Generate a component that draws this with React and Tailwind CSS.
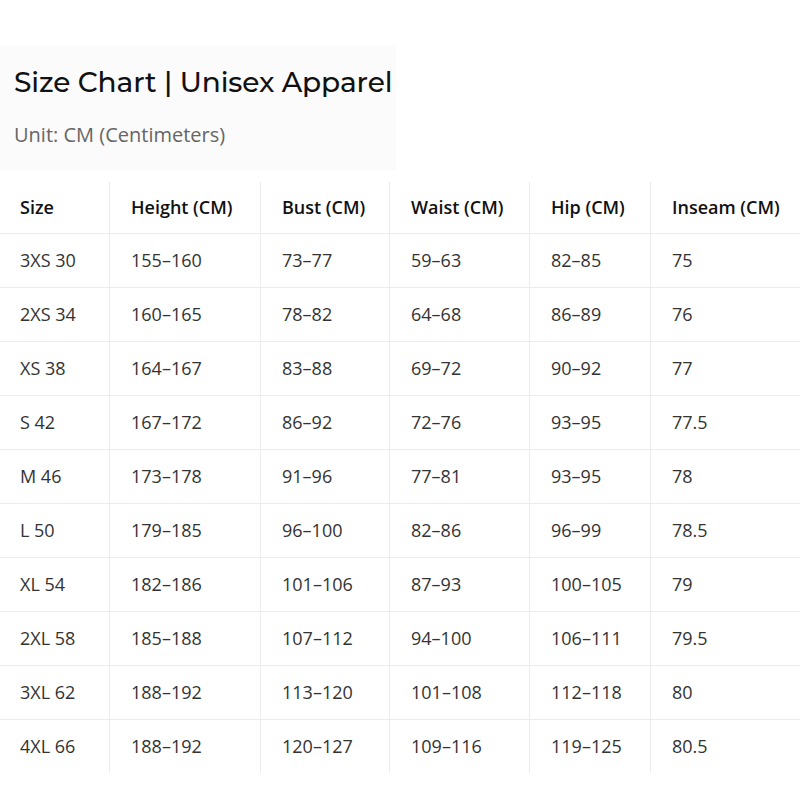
import React from "react";

const cols = ["Size", "Height (CM)", "Bust (CM)", "Waist (CM)", "Hip (CM)", "Inseam (CM)"];
const widths = ["w-[109px]", "w-[151px]", "w-[129px]", "w-[140px]", "w-[121px]", "w-[150px]"];

const rows = [
  ["3XS 30", "155–160", "73–77", "59–63", "82–85", "75"],
  ["2XS 34", "160–165", "78–82", "64–68", "86–89", "76"],
  ["XS 38", "164–167", "83–88", "69–72", "90–92", "77"],
  ["S 42", "167–172", "86–92", "72–76", "93–95", "77.5"],
  ["M 46", "173–178", "91–96", "77–81", "93–95", "78"],
  ["L 50", "179–185", "96–100", "82–86", "96–99", "78.5"],
  ["XL 54", "182–186", "101–106", "87–93", "100–105", "79"],
  ["2XL 58", "185–188", "107–112", "94–100", "106–111", "79.5"],
  ["3XL 62", "188–192", "113–120", "101–108", "112–118", "80"],
  ["4XL 66", "188–192", "120–127", "109–116", "119–125", "80.5"],
];

function Cell({ i, head, children }) {
  return (
    <div
      className={`${widths[i]} shrink-0 flex items-center ${i === 0 ? "pl-[20px]" : "pl-[21px] border-l border-[#ececec]"} ${
        head ? "font-semibold text-[#111]" : "text-[#333]"
      }`}
    >
      {children}
    </div>
  );
}

export default function App() {
  return (
    <div className="w-[800px] h-[800px] bg-white overflow-hidden font-['Open_Sans',sans-serif]">
      <div className="pt-[45px]">
        <div className="w-[396px] h-[125px] bg-[#fbfbfb] pl-[14px] pt-[20px]">
          <h1 className="font-['Montserrat','Inter',sans-serif] font-medium text-[28px] leading-[34px] text-[#111] tracking-[-0.1px]">
            Size Chart | Unisex Apparel
          </h1>
          <p className="mt-[23px] text-[20px] leading-[26px] text-[#666]">Unit: CM (Centimeters)</p>
        </div>
      </div>
      <div className="mt-[10px] text-[18px]">
        <div className="flex h-[53px] pt-[2px]">
          {cols.map((c, i) => (
            <Cell key={c} i={i} head>
              {c}
            </Cell>
          ))}
        </div>
        {rows.map((r, ri) => (
          <div key={ri} className="flex h-[54px] border-t border-[#ececec]">
            {r.map((v, i) => (
              <Cell key={i} i={i}>
                {v}
              </Cell>
            ))}
          </div>
        ))}
      </div>
    </div>
  );
}
